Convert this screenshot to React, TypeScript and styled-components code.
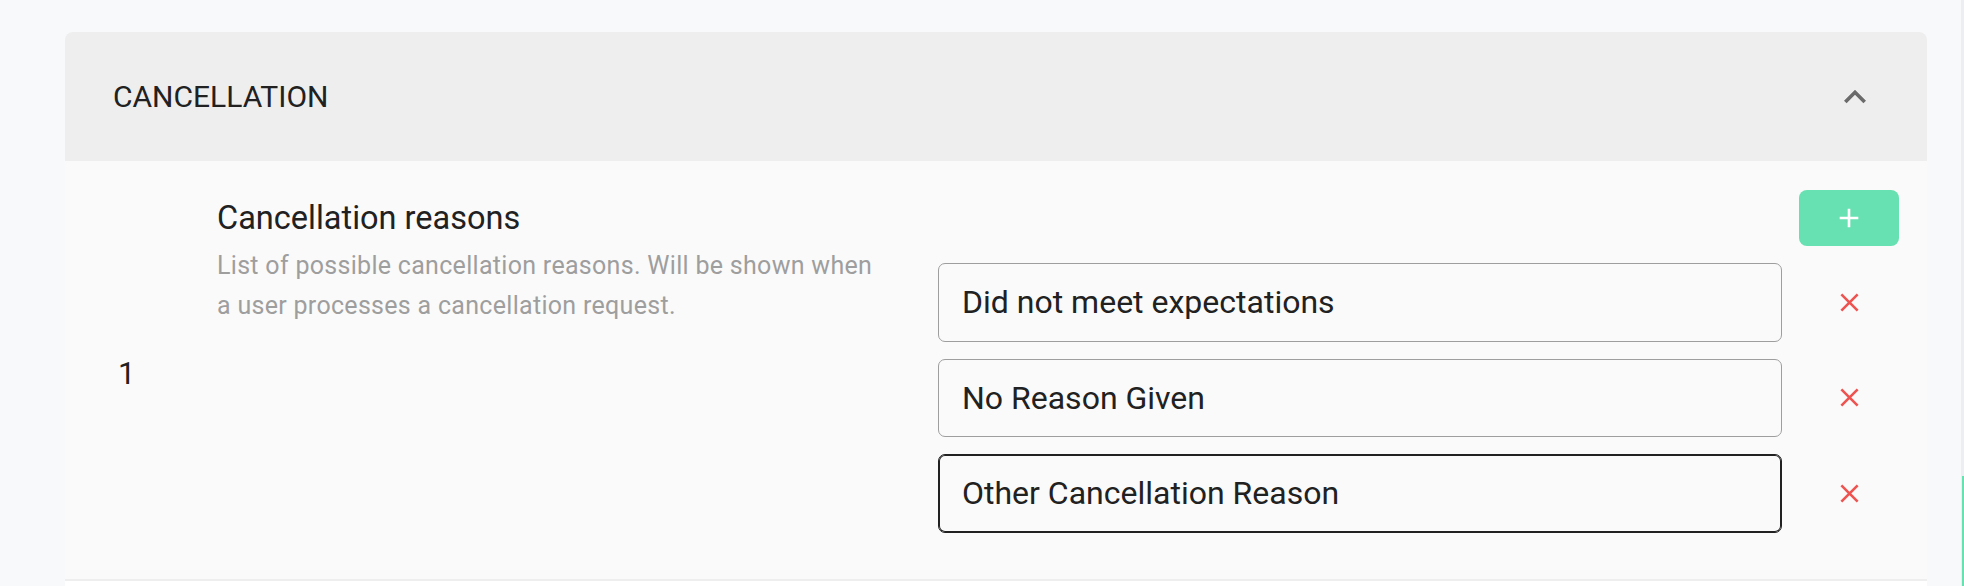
import styled, { createGlobalStyle } from "styled-components";

const Global = createGlobalStyle`
  html, body {
    margin: 0;
    padding: 0;
    overflow: hidden;
    background: #f8f9fb;
    font-family: Roboto, "Liberation Sans", sans-serif;
  }
`;

const Page = styled.div`
  padding: 32px 37px 0 65px;
  height: 586px;
  box-sizing: border-box;
`;

const Card = styled.section`
  border-radius: 8px 8px 0 0;
  overflow: hidden;
`;

const Header = styled.header`
  height: 129px;
  display: flex;
  align-items: center;
  justify-content: space-between;
  padding: 0 50px 0 48px;
  background: #eeeeee;
`;

const Title = styled.h2`
  margin: 0;
  font-size: 30px;
  font-weight: 400;
  color: #212121;
  text-transform: uppercase;
`;

const Toggle = styled.button`
  display: flex;
  padding: 0;
  border: 0;
  background: none;
  color: #6b6b6b;
`;

const Body = styled.div`
  display: flex;
  padding: 29px 28px 46px 53px;
  background: #fafafa;
  border-bottom: 2px solid #eeeeee;
`;

const Index = styled.div`
  width: 99px;
  align-self: center;
  margin-top: 24px;
  font-size: 31px;
  color: #212121;
`;

const Info = styled.div`
  width: 665px;
  margin-right: auto;
  padding-top: 8px;
`;

const Label = styled.div`
  font-size: 32.5px;
  line-height: 40px;
  color: #212121;
`;

const Hint = styled.p`
  margin: 8px 0 0;
  font-size: 25px;
  line-height: 40px;
  letter-spacing: 0.012em;
  color: #9e9e9e;
`;

const Editor = styled.div`
  display: grid;
  grid-template-columns: 844px 100px;
  gap: 17px;
  align-items: center;
`;

const AddButton = styled.button`
  grid-column: 2;
  height: 56px;
  display: flex;
  align-items: center;
  justify-content: center;
  border: 0;
  border-radius: 8px;
  background: #67e0b2;
  color: #ffffff;
`;

const Field = styled.input<{ $active?: boolean }>`
  height: 78.5px;
  box-sizing: border-box;
  padding: 0 23px;
  border: 1.75px solid ${(p) => (p.$active ? "#212121" : "#9e9e9e")};
  box-shadow: ${(p) => (p.$active ? "inset 0 0 0 1px #212121" : "none")};
  border-radius: 7px;
  background: #fafafa;
  font-family: Roboto, "Liberation Sans", sans-serif;
  font-size: 32px;
  color: #212121;
  outline: none;
`;

const Remove = styled.button`
  display: flex;
  justify-content: center;
  padding: 0;
  border: 0;
  background: none;
  color: #ef5350;
`;

const Next = styled.div`
  height: 6px;
  background: #ffffff;
`;

const Scroll = styled.div`
  position: fixed;
  top: 0;
  right: 0;
  bottom: 0;
  width: 3px;
  background: #eceef2;

  &::after {
    content: "";
    position: absolute;
    top: 476px;
    left: 1px;
    right: 0;
    bottom: 0;
    background: #67e0b2;
  }
`;

const reasons = ["Did not meet expectations", "No Reason Given", "Other Cancellation Reason"];

function ChevronUp() {
  return (
    <svg width="44" height="44" viewBox="0 0 24 24" fill="currentColor">
      <path d="M7.41 15.41 12 10.83l4.59 4.58L18 14l-6-6-6 6z" />
    </svg>
  );
}

function Plus() {
  return (
    <svg width="32" height="32" viewBox="0 0 24 24" fill="currentColor">
      <path d="M19 13h-6v6h-2v-6H5v-2h6V5h2v6h6v2z" />
    </svg>
  );
}

function Cross() {
  return (
    <svg width="31" height="31" viewBox="0 0 24 24" fill="currentColor">
      <path d="M19 6.41 17.59 5 12 10.59 6.41 5 5 6.41 10.59 12 5 17.59 6.41 19 12 13.41 17.59 19 19 17.59 13.41 12z" />
    </svg>
  );
}

export default function App() {
  return (
    <>
      <Global />
      <Page>
        <Card>
          <Header>
            <Title>Cancellation</Title>
            <Toggle>
              <ChevronUp />
            </Toggle>
          </Header>

          <Body>
            <Index>1</Index>

            <Info>
              <Label>Cancellation reasons</Label>
              <Hint>
                List of possible cancellation reasons. Will be shown when a user processes a
                cancellation request.
              </Hint>
            </Info>

            <Editor>
              <AddButton>
                <Plus />
              </AddButton>

              {reasons.map((r, i) => (
                <>
                  <Field key={r} defaultValue={r} $active={i === reasons.length - 1} />
                  <Remove key={r + "-x"}>
                    <Cross />
                  </Remove>
                </>
              ))}
            </Editor>
          </Body>
        </Card>

        <Next />
      </Page>
      <Scroll />
    </>
  );
}
